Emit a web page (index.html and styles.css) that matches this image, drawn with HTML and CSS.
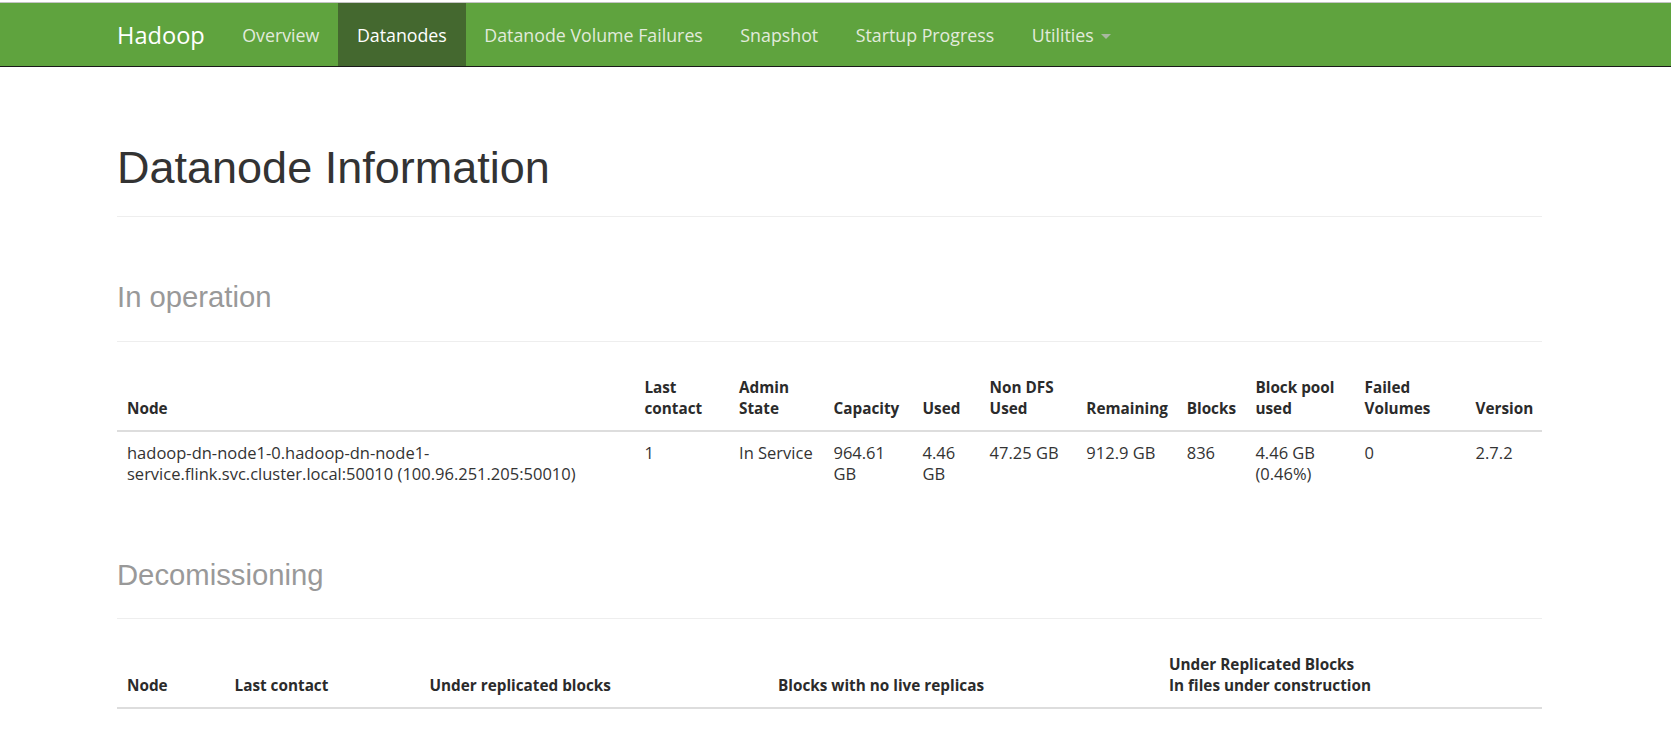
FILE: index.html
```
<!DOCTYPE html>
<html>
<head>
<meta charset="utf-8">
<title>Datanode Information</title>
<link rel="stylesheet" href="styles.css">
</head>
<body>
<nav class="navbar">
  <div class="nav-inner">
    <a class="brand" href="#">Hadoop</a>
    <ul class="nav">
      <li><a href="#">Overview</a></li>
      <li class="active"><a href="#">Datanodes</a></li>
      <li><a href="#">Datanode Volume Failures</a></li>
      <li><a href="#">Snapshot</a></li>
      <li><a href="#">Startup Progress</a></li>
      <li><a href="#">Utilities <span class="caret"></span></a></li>
    </ul>
  </div>
</nav>
<div class="container">
  <div class="page-header"><h1>Datanode Information</h1></div>

  <div class="page-header"><h1><small>In operation</small></h1></div>
  <table class="table">
    <colgroup>
      <col class="c-node"><col class="c-last"><col class="c-admin"><col class="c-cap"><col class="c-used"><col class="c-nondfs"><col class="c-rem"><col class="c-blocks"><col class="c-pool"><col class="c-failed"><col class="c-ver">
    </colgroup>
    <thead>
      <tr>
        <th>Node</th>
        <th>Last contact</th>
        <th>Admin State</th>
        <th>Capacity</th>
        <th>Used</th>
        <th>Non DFS Used</th>
        <th>Remaining</th>
        <th>Blocks</th>
        <th>Block pool used</th>
        <th>Failed Volumes</th>
        <th>Version</th>
      </tr>
    </thead>
    <tbody>
      <tr>
        <td>hadoop-dn-node1-0.hadoop-dn-node1-service.flink.svc.cluster.local:50010 (100.96.251.205:50010)</td>
        <td>1</td>
        <td class="nw">In Service</td>
        <td>964.61 GB</td>
        <td>4.46 GB</td>
        <td class="nw">47.25 GB</td>
        <td class="nw">912.9 GB</td>
        <td>836</td>
        <td>4.46 GB (0.46%)</td>
        <td>0</td>
        <td>2.7.2</td>
      </tr>
    </tbody>
  </table>

  <div class="page-header"><h1><small>Decomissioning</small></h1></div>
  <table class="table">
    <colgroup>
      <col class="d-node"><col class="d-last"><col class="d-under"><col class="d-nolive"><col class="d-files">
    </colgroup>
    <thead>
      <tr>
        <th>Node</th>
        <th>Last contact</th>
        <th>Under replicated blocks</th>
        <th>Blocks with no live replicas</th>
        <th>Under Replicated Blocks<br>In files under construction</th>
      </tr>
    </thead>
  </table>
</div>
</body>
</html>
```
FILE: styles.css
```
html, body {
  margin: 0;
  padding: 0;
  background: #fff;
}

body {
  font-family: "Open Sans", "Liberation Sans", Arial, sans-serif;
  font-size: 16.5px;
  color: #333;
}

a {
  text-decoration: none;
}

.navbar {
  margin-top: 2px;
  border-top: 1px solid #c4c4c4;
  border-bottom: 1px solid #1a1a1a;
  background: #5fa33e;
  height: 63px;
}

.nav-inner {
  display: flex;
  height: 100%;
  padding-left: 117px;
}

.brand {
  display: flex;
  align-items: center;
  padding-right: 18.75px;
  font-size: 23.6px;
  color: #fff;
}

.nav {
  display: flex;
  list-style: none;
  margin: 0;
  padding: 0;
}

.nav li {
  display: flex;
}

.nav li a {
  display: flex;
  align-items: center;
  padding: 0 18.75px;
  font-size: 17.8px;
  color: #e2ebdc;
}

.nav li.active a {
  background: #44682f;
  color: #fff;
}

.caret {
  display: inline-block;
  width: 0;
  height: 0;
  margin-left: 7px;
  margin-top: 3px;
  border-top: 5px solid #a9b8a0;
  border-left: 5px solid transparent;
  border-right: 5px solid transparent;
}

.container {
  width: 1425px;
  margin-left: 117px;
  padding-top: 26px;
}

.page-header {
  padding-bottom: 11.25px;
  border-bottom: 1px solid #eee;
  margin: 0 0 25px;
}

.page-header h1 {
  margin: 50px 0 12.5px;
  font-family: "Liberation Sans", Arial, sans-serif;
  font-size: 45px;
  line-height: 1.1;
  font-weight: normal;
  color: #333;
}

.page-header h1 small {
  font-size: 29.25px;
  color: #999;
}

.table {
  width: 1425px;
  table-layout: fixed;
  border-collapse: collapse;
  border-spacing: 0;
  margin: 0;
}

.table th,
.table td {
  padding: 10px;
  line-height: 21.5px;
  text-align: left;
  vertical-align: top;
}

.table th {
  vertical-align: bottom;
  font-weight: 700;
  font-size: 15.3px;
  color: #2b2b2b;
  border-bottom: 2.5px solid #ddd;
}

.table td {
  border-top: 1px solid #ddd;
}

.table .nw {
  white-space: nowrap;
}

.c-node { width: 517px; }
.c-last { width: 94.6px; }
.c-admin { width: 94.4px; }
.c-cap { width: 89px; }
.c-used { width: 67px; }
.c-nondfs { width: 96.7px; }
.c-rem { width: 100.3px; }
.c-blocks { width: 68.7px; }
.c-pool { width: 109px; }
.c-failed { width: 111px; }
.c-ver { width: 76.3px; }

.d-node { width: 107.5px; }
.d-last { width: 195px; }
.d-under { width: 348.5px; }
.d-nolive { width: 391px; }
.d-files { width: 383px; }
```
